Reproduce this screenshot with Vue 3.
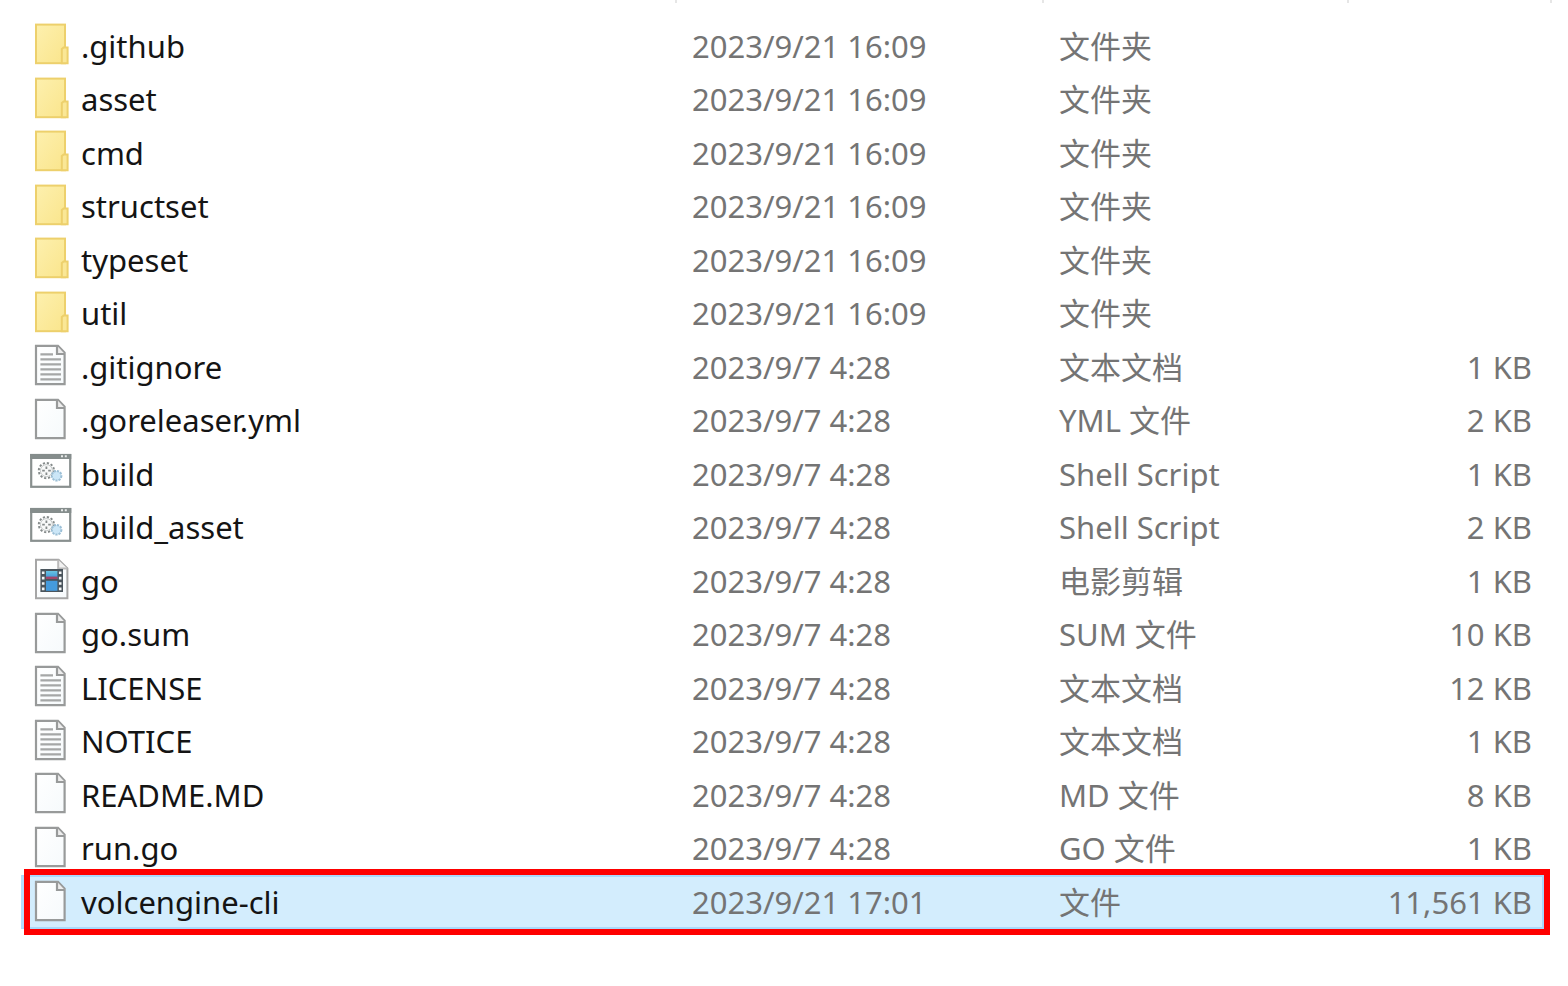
<script setup>
const folders = ['.github', 'asset', 'cmd', 'structset', 'typeset', 'util'].map((name) => ({
  name, icon: 'folder', date: '2023/9/21 16:09', type: '文件夹', size: ''
}))

const old = '2023/9/7 4:28'
const files = [
  { name: '.gitignore', icon: 'text', date: old, type: '文本文档', size: '1 KB' },
  { name: '.goreleaser.yml', icon: 'blank', date: old, type: 'YML 文件', size: '2 KB' },
  { name: 'build', icon: 'script', date: old, type: 'Shell Script', size: '1 KB' },
  { name: 'build_asset', icon: 'script', date: old, type: 'Shell Script', size: '2 KB' },
  { name: 'go', icon: 'movie', date: old, type: '电影剪辑', size: '1 KB' },
  { name: 'go.sum', icon: 'blank', date: old, type: 'SUM 文件', size: '10 KB' },
  { name: 'LICENSE', icon: 'text', date: old, type: '文本文档', size: '12 KB' },
  { name: 'NOTICE', icon: 'text', date: old, type: '文本文档', size: '1 KB' },
  { name: 'README.MD', icon: 'blank', date: old, type: 'MD 文件', size: '8 KB' },
  { name: 'run.go', icon: 'blank', date: old, type: 'GO 文件', size: '1 KB' },
  { name: 'volcengine-cli', icon: 'blank', date: '2023/9/21 17:01', type: '文件', size: '11,561 KB', selected: true }
]

const rows = [...folders, ...files]
</script>

<template>
  <main class="explorer">
    <svg class="defs" aria-hidden="true">
      <defs>
        <linearGradient id="folderFill" x1="0" y1="0" x2="1" y2="1">
          <stop offset="0" stop-color="#fdf0ae" />
          <stop offset="1" stop-color="#fae58c" />
        </linearGradient>
        <linearGradient id="pageFill" x1="0" y1="0" x2="1" y2="1">
          <stop offset="0" stop-color="#ffffff" />
          <stop offset="1" stop-color="#f6fafc" />
        </linearGradient>
        <linearGradient id="filmFill" x1="0" y1="0" x2="0" y2="1">
          <stop offset="0" stop-color="#69c3e3" />
          <stop offset="1" stop-color="#3a8fd6" />
        </linearGradient>
      </defs>
    </svg>
    <table class="list">
      <colgroup>
        <col />
        <col class="c-date" />
        <col class="c-type" />
        <col class="c-size" />
      </colgroup>
      <thead>
        <tr>
          <th scope="col" aria-label="名称"></th>
          <th scope="col" aria-label="修改日期"></th>
          <th scope="col" aria-label="类型"></th>
          <th scope="col" aria-label="大小"></th>
        </tr>
      </thead>
      <tbody>
        <tr v-for="row in rows" :key="row.name" :class="{ selected: row.selected }">
          <td>
            <div class="name">
              <svg class="icon" viewBox="0 0 42 42" aria-hidden="true">
                <g v-if="row.icon === 'folder'" stroke="#edd06c" stroke-width="2">
                  <rect x="6" y="1.6" width="29" height="38.6" fill="url(#folderFill)" />
                  <path d="M31.8 40.2V26L33.6 24.4H37.6V40.2Z" fill="#fae796" />
                </g>
                <g v-else-if="row.icon === 'script'">
                  <rect x="1.2" y="4" width="39" height="31.8" fill="#fff" stroke="#89908f" stroke-width="2.2" />
                  <path d="M0.1 3H41.3V8H0.1Z" fill="#858d8c" />
                  <path d="M31 5.2h2M34.8 5.2h2" stroke="#e8eaea" stroke-width="2" />
                  <circle cx="16.4" cy="19.6" r="7.6" fill="none" stroke="#858b8b" stroke-width="2" stroke-dasharray="2.2 1.8" />
                  <circle cx="16.4" cy="19.6" r="6" fill="#f8f9f9" stroke="#c2c6c6" stroke-width="1" />
                  <path d="M16.4 15.4v2.6M16.4 21.4v2.6M12.2 19.6h2.6M18.2 19.6h2.6" stroke="#858b8b" stroke-width="1.8" />
                  <circle cx="26.6" cy="24.8" r="4.8" fill="#cbe6f7" stroke="#9cbfd6" stroke-width="2" stroke-dasharray="2.2 1" />
                </g>
                <g v-else-if="row.icon === 'movie'">
                  <path d="M6 1.8H28.6L37.4 10.4V40.2H6Z" fill="url(#pageFill)" stroke="#a6a6a6" stroke-width="2" />
                  <path d="M28.2 1.8V10.4H37.4" fill="#f2f2f2" stroke="#bababa" stroke-width="2" />
                  <rect x="10.4" y="11" width="22.6" height="23" fill="#4a555d" />
                  <rect x="16" y="13" width="11.4" height="8" fill="url(#filmFill)" />
                  <rect x="16" y="18.6" width="11.4" height="2.4" fill="#a1476b" />
                  <rect x="16" y="22.8" width="11.4" height="10" fill="#459bdd" />
                  <path d="M13.2 13.4V33M30.2 13.4V33" stroke="#f4f6f7" stroke-width="2.6" stroke-dasharray="2.6 2.8" />
                </g>
                <g v-else>
                  <path d="M6 1.8H28L34.6 8.6V40.2H6Z" fill="url(#pageFill)" stroke="#989a9a" stroke-width="2.2" />
                  <path d="M27 1.8V10H34.6" fill="#ededed" stroke="#989a9a" stroke-width="2.2" />
                  <path v-if="row.icon === 'text'" d="M10.4 10.4H23M10.4 15.4H31M10.4 20.4H31M10.4 25.4H31M10.4 30.4H31M10.4 35.4H31" stroke="#a5a7a7" stroke-width="2.2" />
                </g>
              </svg>
              <span>{{ row.name }}</span>
            </div>
            <span v-if="row.selected" class="highlight" aria-hidden="true"></span>
          </td>
          <td class="meta">{{ row.date }}</td>
          <td class="meta">{{ row.type }}</td>
          <td class="meta size">{{ row.size }}</td>
        </tr>
      </tbody>
    </table>
  </main>
</template>

<style>
body {
  background: #fff;
}
</style>

<style scoped>
.explorer {
  padding: 0 24px 24px 21px;
  font-family: "Noto Sans", "Noto Sans CJK SC", sans-serif;
  font-size: 31px;
  line-height: 40px;
  color: #141414;
}
.defs {
  position: absolute;
  width: 0;
  height: 0;
}
.list {
  width: 100%;
  table-layout: fixed;
  border-collapse: separate;
  border-spacing: 0;
}
.c-date {
  width: 367px;
}
.c-type {
  width: 305px;
}
.c-size {
  width: 195px;
}
th {
  position: relative;
  height: 19px;
  padding: 0;
}
th::after {
  content: "";
  position: absolute;
  top: 0;
  right: 0;
  width: 2px;
  height: 3px;
  background: #e6e6e6;
}
th:last-child::after {
  right: -8px;
}
td {
  height: 53px;
  padding: 0;
  white-space: nowrap;
  vertical-align: middle;
}
tbody tr:nth-child(even) td {
  height: 54px;
}
.name {
  display: flex;
  align-items: center;
  gap: 9px;
  padding-left: 9px;
}
.icon {
  flex: none;
  width: 42px;
  height: 42px;
  margin-bottom: 3px;
}
.meta {
  padding-left: 15px;
  color: #747474;
}
.size {
  padding-right: 12px;
  text-align: right;
}
.selected {
  position: relative;
}
.selected td {
  background: #d3edfd;
  border-top: 2px solid #a9d9fb;
  border-bottom: 2px solid #a9d9fb;
  height: 50px;
}
.selected td:first-child {
  border-left: 3px solid #b4defc;
}
.selected td:last-child {
  border-right: 2px solid #a9d9fb;
  padding-right: 10px;
}
.selected .name {
  padding-left: 6px;
}
.highlight {
  position: absolute;
  top: -6px;
  right: -6px;
  bottom: -6px;
  left: 3px;
  border: 6px solid #fe0000;
  pointer-events: none;
}
</style>
